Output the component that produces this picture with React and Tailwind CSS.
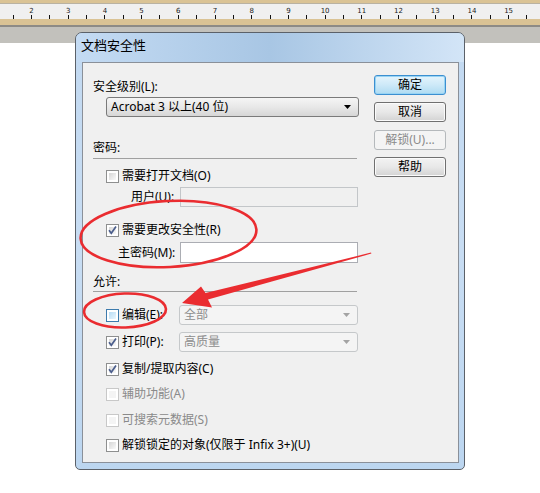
import React from 'react';

const FONT = "font-['Noto_Sans','Noto_Sans_CJK_SC',sans-serif]";

function Ruler() {
  const marks = [];
  for (let n = 2; n <= 15; n++) marks.push(n);
  const x = (n) => 31 + (n - 2) * 36.7;
  return (
    <svg width="540" height="27" className="block">
      <rect x="0" y="0" width="540" height="3" fill="#dac395" />
      <rect x="0" y="3" width="540" height="1" fill="#b9b2a2" />
      <rect x="0" y="4" width="540" height="15" fill="#f0f0f0" />
      <rect x="0" y="19" width="540" height="6" fill="#dac395" />
      <rect x="0" y="25" width="540" height="2" fill="#8d8b86" />
      {[1, ...marks, 16].map((n) => (
        <g key={n}>
          <rect x={Math.round(x(n))} y="15" width="1" height="4" fill="#111" />
          <rect x={Math.round(x(n) - 18.35)} y="15" width="1" height="4" fill="#111" />
        </g>
      ))}
      {marks.map((n) => (
        <text key={n} x={x(n) + 0.5} y="13" fontSize="7" textAnchor="middle" fill="#222" fontFamily="DejaVu Sans, sans-serif">
          {n}
        </text>
      ))}
    </svg>
  );
}

function CheckBox({ checked, disabled, hover }) {
  const border = disabled ? 'border-[#c8c8c8]' : hover ? 'border-[#3d7bad]' : 'border-[#8e8f8f]';
  const inner = disabled
    ? 'bg-[#f4f4f4]'
    : hover
    ? 'bg-gradient-to-br from-[#b7dcf5] to-[#eaf6fd]'
    : 'bg-gradient-to-br from-[#d6d6d6] to-[#fafafa]';
  return (
    <span className={`relative flex w-[13px] h-[13px] shrink-0 border ${border} bg-white p-[2px]`}>
      <span className={`flex-1 ${inner}`} />
      {checked && (
        <svg className="absolute inset-0" width="11" height="11" viewBox="0 0 11 11">
          <path d="M2 5.2 L4.3 8.3 L9 1.6" stroke="#4b5e8c" strokeWidth="1.7" fill="none" />
        </svg>
      )}
    </span>
  );
}

function CheckRow({ label, checked, disabled, hover, className = '' }) {
  return (
    <div className={`flex items-center h-[16px] pl-[13px] gap-[3px] ${className}`}>
      <CheckBox checked={checked} disabled={disabled} hover={hover} />
      <span className={disabled ? 'text-[#8a8a8a]' : 'text-black'}>{label}</span>
    </div>
  );
}

function Arrow({ color }) {
  return (
    <svg width="7" height="4" viewBox="0 0 7 4">
      <path d="M0 0 H7 L3.5 4 Z" fill={color} />
    </svg>
  );
}

function Combo({ text, disabled, className = '' }) {
  const look = disabled
    ? 'border-[#c5c8ca] bg-[#f4f4f4] text-[#8d8d8d]'
    : 'border-[#7a7a7a] bg-gradient-to-b from-[#f5f5f5] via-[#e8e8e8] to-[#d6d6d6] text-black';
  return (
    <div className={`flex items-center h-[20px] border rounded-[3px] pl-[4px] pr-[7px] ${look} ${className}`}>
      <span className="flex-1">{text}</span>
      <Arrow color={disabled ? '#a3a3a3' : '#000'} />
    </div>
  );
}

function Button({ label, primary, disabled, className = '' }) {
  const look = disabled
    ? 'border-[#b5b9bc] bg-[#f4f4f4] text-[#8a8a8a]'
    : primary
    ? 'border-[#3c8fd0] bg-gradient-to-b from-[#e5f4fc] via-[#cde9f8] to-[#aedbf2] text-black shadow-[inset_0_0_0_1px_#98d4f4]'
    : 'border-[#707070] bg-gradient-to-b from-[#f3f3f3] via-[#e8e8e8] to-[#d3d3d3] text-black shadow-[inset_0_0_0_1px_#fbfbfb]';
  return (
    <div className={`flex items-center justify-center h-[20px] w-[72px] border rounded-[3px] ${look} ${className}`}>
      {label}
    </div>
  );
}

function Separator({ className = '' }) {
  return <div className={`w-[264px] h-[2px] border-t border-[#a0a0a0] border-b-white ${className}`} />;
}

function Annotations() {
  return (
    <svg className="absolute inset-0 pointer-events-none" width="540" height="493">
      <ellipse cx="168.5" cy="234" rx="88" ry="33" transform="rotate(-3 168.5 234)" fill="none" stroke="#ea2c30" strokeWidth="2.6" />
      <ellipse cx="125" cy="310.5" rx="41" ry="17" transform="rotate(-2 125 310.5)" fill="none" stroke="#ea2c30" strokeWidth="2.6" />
      <path
        d="M371 252.6 L371.4 253.6 L208 299.5 L212 307.5 L182 303 L201 286.5 L205.5 293 Z"
        fill="#ea2c30"
      />
    </svg>
  );
}

export default function App() {
  return (
    <div className={`relative w-[540px] h-[493px] overflow-hidden bg-white text-[12px] leading-[16px] ${FONT}`}>
      <Ruler />
      <div className="h-[16px] bg-[#c2c1bc]" />

      {/* dialog window */}
      <div className="absolute left-[75px] top-[32px] w-[390px] h-[438px] flex flex-col rounded-t-[7px] rounded-b-[5px] border border-[#5b6169] bg-gradient-to-b from-[#c2d9f1] via-[#c8ddf3] to-[#bcd6f0]">
        <div className="h-[29px] shrink-0 rounded-t-[6px] pl-[5px] pt-[4px] text-[13px] bg-gradient-to-r from-[#c4dbf3] via-[#a8c6e4] to-[#d3e5f7]">
          文档安全性
        </div>
        <div className="ml-[6px] w-[377px] h-[401px] flex border border-[#8a9099] bg-[#f0f0f0]">
          {/* left column */}
          <div className="w-[291px] pl-[10px] pt-[16px] flex flex-col">
            <div className="h-[16px]">安全级别(L):</div>
            <Combo text="Acrobat 3 以上(40 位)" className="mt-[2px] ml-[13px] w-[253px]" />

            <div className="h-[16px] mt-[23px]">密码:</div>
            <Separator className="mt-[2px]" />
            <CheckRow label="需要打开文档(O)" className="mt-[8px]" />
            <div className="flex items-center h-[20px] mt-[3px]">
              <span className="ml-[38px] w-[49px]">用户(U):</span>
              <div className="w-[178px] h-[20px] border border-[#c3c6c9] bg-[#f0f0f0]" />
            </div>
            <CheckRow label="需要更改安全性(R)" checked className="mt-[15px]" />
            <div className="flex items-center h-[21px] mt-[4px]">
              <span className="ml-[25px] w-[62px]">主密码(M):</span>
              <div className="w-[178px] h-[21px] border border-[#abadb3] bg-white" />
            </div>

            <div className="h-[16px] mt-[11px]">允许:</div>
            <Separator className="mt-[1px]" />
            <div className="flex items-center h-[20px] mt-[12px]">
              <CheckRow label="编辑(E):" hover className="w-[86px]" />
              <Combo text="全部" disabled className="w-[179px]" />
            </div>
            <div className="flex items-center h-[20px] mt-[7px]">
              <CheckRow label="打印(P):" checked className="w-[86px]" />
              <Combo text="高质量" disabled className="w-[179px]" />
            </div>
            <CheckRow label="复制/提取内容(C)" checked className="mt-[9px]" />
            <CheckRow label="辅助功能(A)" disabled className="mt-[9px]" />
            <CheckRow label="可搜索元数据(S)" disabled className="mt-[10px]" />
            <CheckRow label="解锁锁定的对象(仅限于 Infix 3+)(U)" className="mt-[9px]" />
          </div>

          {/* right column */}
          <div className="pt-[12px] flex flex-col">
            <Button label="确定" primary />
            <Button label="取消" className="mt-[7px]" />
            <Button label="解锁(U)..." disabled className="mt-[8px]" />
            <Button label="帮助" className="mt-[7px]" />
          </div>
        </div>
      </div>

      <Annotations />
    </div>
  );
}
